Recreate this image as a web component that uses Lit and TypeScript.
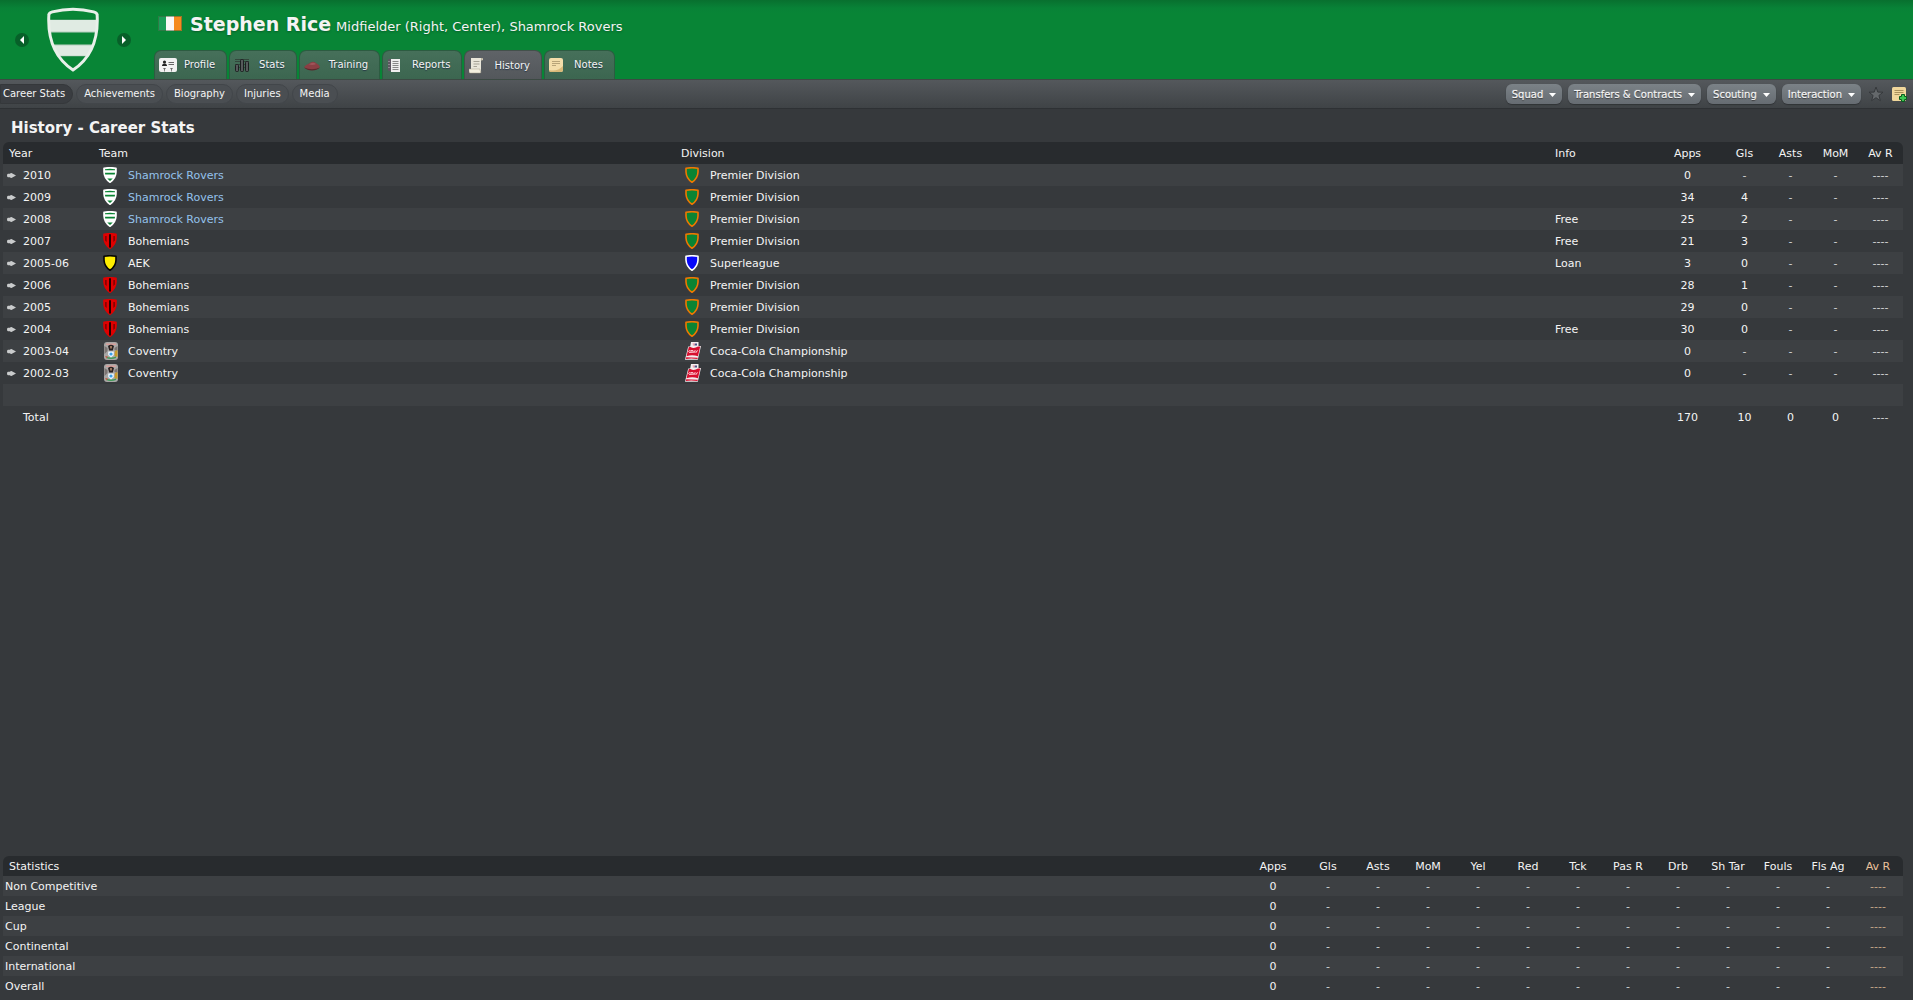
import { LitElement, html, css, svg, nothing } from "lit";
import { customElement } from "lit/decorators.js";
import { classMap } from "lit/directives/class-map.js";

type Season = {
  year: string;
  team: string;
  badge: string;
  own?: boolean;
  division: string;
  comp: string;
  info?: string;
  apps: string;
  gls: string;
};

const rovers = { team: "Shamrock Rovers", badge: "rovers", own: true };
const bohs = { team: "Bohemians", badge: "bohemians" };
const coventry = { team: "Coventry", badge: "coventry" };
const premier = { division: "Premier Division", comp: "premier" };
const cola = { division: "Coca-Cola Championship", comp: "cola" };

const SEASONS: Season[] = [
  { year: "2010", ...rovers, ...premier, apps: "0", gls: "-" },
  { year: "2009", ...rovers, ...premier, apps: "34", gls: "4" },
  { year: "2008", ...rovers, ...premier, info: "Free", apps: "25", gls: "2" },
  { year: "2007", ...bohs, ...premier, info: "Free", apps: "21", gls: "3" },
  { year: "2005-06", team: "AEK", badge: "aek", division: "Superleague", comp: "super", info: "Loan", apps: "3", gls: "0" },
  { year: "2006", ...bohs, ...premier, apps: "28", gls: "1" },
  { year: "2005", ...bohs, ...premier, apps: "29", gls: "0" },
  { year: "2004", ...bohs, ...premier, info: "Free", apps: "30", gls: "0" },
  { year: "2003-04", ...coventry, ...cola, apps: "0", gls: "-" },
  { year: "2002-03", ...coventry, ...cola, apps: "0", gls: "-" },
];

const TABS = ["Profile", "Stats", "Training", "Reports", "History", "Notes"];
const PAGES = ["Career Stats", "Achievements", "Biography", "Injuries", "Media"];
const MENUS = ["Squad", "Transfers & Contracts", "Scouting", "Interaction"];
const STAT_COLS = ["Gls", "Asts", "MoM", "Yel", "Red", "Tck", "Pas R", "Drb", "Sh Tar", "Fouls", "Fls Ag"];
const STAT_ROWS = ["Non Competitive", "League", "Cup", "Continental", "International", "Overall"];

const SHIELD = "M1 1.2C5 .6 9 .6 13 1.2V5C12.800 9.500 10.500 13 7 15.2C3.500 13 1.200 9.500 1 5Z";

const shield = (fill: string, edge: string) =>
  svg`<path d=${SHIELD} fill=${fill} stroke=${edge} stroke-width="1.6" stroke-linejoin="round"/>`;

const BADGES: Record<string, unknown> = {
  rovers: svg`${shield("#fff", "#fff")}
    <path d="M2 2.300Q7 1.200 12 2.300V3.200H2Z M2 5.800H12L11.800 7.400H2.200Z M4.200 11.600H9.800L7 14Z" fill="#0a8433"/>`,
  bohemians: svg`${shield("#e00000", "#e00000")}
    <path d="M6.100 1.200H7.900V14.500H6.100Z M2.600 3H3.300V9L2.600 7.500Z M11.400 3H10.700V9L11.400 7.500Z" fill="#100"/>`,
  aek: shield("#ffee00", "#050505"),
  premier: shield("#0a8433", "#f07800"),
  super: shield("#0808f8", "#ffffff"),
};

const badge = (name: string) => {
  if (name === "coventry") {
    return html`<svg class="badge wide" viewBox="0 0 16 18" aria-hidden="true">
      <rect x="1" y="0" width="14" height="18" rx="3" fill="#a9a7a6"/>
      <path d="M3 1.500H13V3H3Z" fill="#d8a09c"/>
      <path d="M1.500 4L4.500 6V9L1.500 12Z M14.500 4L11.500 6V8L14.500 9Z" fill="#7a7472"/>
      <path d="M5 4Q8 1.500 11 4L9.800 8.500H6.200Z" fill="#2b2222"/>
      <path d="M7.200 4H8.800V6.500H7.200Z" fill="#b58a6a"/>
      <path d="M12 9L14.500 8V15L11.500 14Z" fill="#c89a28"/>
      <path d="M3 14.500Q8 16.500 13 14.500V16Q8 18 3 16Z" fill="#3f9a58"/>
      <path d="M5.200 9.500H10.800V13L8 15.500L5.200 13Z" fill="#eaf6ff"/>
      <circle cx="8" cy="12" r="1.600" fill="#3aa0e8"/>
      <path d="M2 14L5 14.500L3.500 16.500Z" fill="#c8604a"/>
    </svg>`;
  }
  if (name === "cola") {
    return html`<svg class="badge wide" viewBox="0 0 16 18" aria-hidden="true">
      <path d="M6 0H13.500V4H16L12.800 17.800H0L3.200 4.500H5.200Z" fill="#f4eef0"/>
      <path d="M3.800 5H5.500Q9 7 13 4.500H15.200L13 14.200Q7 12.500 1.500 14.200Z" fill="#d80f2e"/>
      <path d="M7.500 1.200H10V3.200L8 3.800Z" fill="#e9aab4"/>
      <path d="M10 1.500H12V3.500H9.500Z" fill="#4a5288"/>
      <path d="M3.500 10Q4 8 5.500 8.500M6 10.200V8.500H8V10.200M9 10Q9.500 8.200 10.500 8.500M11.500 10L12.500 8.200M4 10.500L12 10" fill="none" stroke="#ffd0d8" stroke-width=".9"/>
      <path d="M1.200 15.300L12.800 15.800L12.500 17Q6 16 .800 17Z" fill="#d80f2e"/>
    </svg>`;
  }
  return html`<svg class="badge" viewBox="0 0 14 16" aria-hidden="true">${BADGES[name]}</svg>`;
};

const TAB_ICONS: Record<string, unknown> = {
  Profile: svg`<rect x="0" y="2" width="18" height="14" rx="2" fill="#f1f1f1"/>
    <circle cx="5.500" cy="6" r="1.600" fill="#222"/><path d="M3 10Q3 7.500 5.500 7.500T8 10Z" fill="#222"/>
    <path d="M9.500 6.500H15M9.500 8.500H15" stroke="#666" stroke-width="1"/>
    <path d="M5.500 12V15.500M12.500 12V15.500" stroke="#888" stroke-width="1"/><path d="M4 12H7L5.500 14ZM11 12H14L12.500 14Z" fill="#666"/>`,
  Stats: svg`<path d="M1 3.500H15M1 5.500H15M1 8.500H15M1 11.500H15" stroke="#33463b" stroke-width="1"/>
    <g stroke="#1c1f20" stroke-width="1" fill="#55595b"><rect x="1.500" y="8.500" width="3" height="7" rx="1"/><rect x="6.500" y="3.500" width="3" height="12" rx="1"/><rect x="11.500" y="5.500" width="3" height="10" rx="1"/></g>`,
  Training: svg`<path d="M0 11Q2 8.500 5 7.500Q8.500 4.500 12 7Q15.500 9 16 11Q13 14 8 14T0 11Z" fill="#8a3f44"/>
    <path d="M0 11.500Q8 15 16 11.500Q13 14.500 8 14.500T0 11.500Z" fill="#5a282c"/><path d="M5 8.500Q8.500 5.500 12 8Q9 9.500 5 8.500Z" fill="#a0545a"/>`,
  Reports: svg`<rect x="1" y="3" width="11" height="12" rx="1" fill="#5d5560"/><rect x="4" y="3" width="9" height="13" fill="#eee"/>
    <path d="M5.500 5.500H11.500M5.500 7.500H11.500M5.500 9.500H11.500M5.500 11.500H11.500M5.500 13.500H11.500" stroke="#888" stroke-width="1"/>
    <path d="M1 5.500H3M1 8.500H3M1 11.500H3" stroke="#8a858c" stroke-width="1"/>`,
  History: svg`<path d="M2 1H13Q14 1 14 3H12V14H1V12H2Z" fill="#e9e6da"/><path d="M0 12H11Q10.500 14 12 14.500Q12 16 11 16H1Q0 16 0 14Z" fill="#f4f0e0" stroke="#aaa38c" stroke-width=".5"/>
    <path d="M4.500 4.500H10.500M4.500 7H10.500M4.500 9.500H8" stroke="#a5a296" stroke-width="1"/><path d="M12 1H13.500V3.500H12Z" fill="#b9b39c"/>`,
  Notes: svg`<rect x="0" y="2" width="14" height="14" rx="2" fill="#f3ddaa"/><path d="M0 14Q8 16 14 10V14Q14 16 12 16H2Q0 16 0 14Z" fill="#d9b979"/>
    <path d="M3 5.500H11M3 7.500H11M3 9.500H7" stroke="#b8a478" stroke-width="1"/>`,
};

@customElement("app-root")
export class AppRoot extends LitElement {
  static styles = css`
    :host {
      display: block;
      box-sizing: border-box;
      min-height: 100vh;
      padding-right: 3px;
      background: #fff;
      color: #f4f4f4;
      font: 11px/22px "DejaVu Sans", sans-serif;
    }
    * { box-sizing: border-box; }
    button { font: inherit; color: inherit; background: none; border: 0; margin: 0; padding: 0; }
    a { color: inherit; text-decoration: none; }
    svg { display: block; flex: none; }
    .app { display: flex; flex-direction: column; min-height: 100vh; background: #36393c; }

    .banner {
      display: flex;
      height: 79px;
      background: linear-gradient(#08702f, #088237 8px, #088536 14px);
    }
    .switcher { display: flex; align-items: center; justify-content: space-between; width: 154px; padding: 0 23px 0 15px; }
    .step { display: flex; align-items: center; justify-content: center; width: 14px; height: 14px; border-radius: 7px; background: #076029; }
    .crest { width: 54px; height: 65px; }
    .ident { display: flex; flex-direction: column; justify-content: space-between; }
    .heading { display: flex; align-items: baseline; padding: 10px 0 0 4px; line-height: 28px; text-shadow: 0 1px 2px #06602a; }
    .flag { width: 24px; height: 15px; margin-right: 8px; }
    .name { margin: 0 5px 0 0; font-size: 19px; font-weight: bold; }
    .role { font-size: 13px; }

    .tabs { display: flex; gap: 2px; }
    .tab {
      display: flex;
      align-items: center;
      height: 29px;
      padding: 0 11px 0 4px;
      border: 1px solid #2c5c41;
      border-bottom: 0;
      border-radius: 7px 7px 0 0;
      background: linear-gradient(#46705a, #3c6650);
      font-size: 10px;
      line-height: 28px;
      text-shadow: 0 1px 1px #234;
    }
    .tab.active { background: linear-gradient(#5f6367, #53575b); border-color: #43514b; height: 30px; margin-bottom: -1px; }
    .tabicon { width: 18px; height: 18px; margin-right: 7px; }

    .subnav {
      display: flex;
      align-items: center;
      justify-content: space-between;
      height: 30px;
      padding-right: 6px;
      border-top: 1px solid #3c4a43;
      border-bottom: 1px solid #2e3134;
      background: linear-gradient(#54585c, #3f4346);
      font-size: 10px;
    }
    .pages { display: flex; gap: 3px; }
    .page {
      height: 20px;
      padding: 0 7px;
      border: 1px solid #42464a;
      border-radius: 10px;
      background: #4a4e52;
      line-height: 18px;
    }
    .page.active { background: #3a3d41; border-color: #35383b; border-radius: 0 10px 10px 0; padding-left: 2px; }
    .menus { display: flex; align-items: center; gap: 6px; }
    .menu {
      display: flex;
      align-items: center;
      gap: 6px;
      height: 20px;
      padding: 1px 6px 0;
      border-radius: 6px;
      background: linear-gradient(#7b8287, #666c72);
      box-shadow: 0 1px 1px #303336;
      line-height: 20px;
      text-shadow: 0 1px 1px #333, 0 0 1px #fff;
    }
    .tool { display: flex; margin-left: 1px; }

    .title { margin: 0; padding: 6px 11px 0; height: 33px; font-size: 15px; line-height: 26px; font-weight: bold; }
    .grid {
      width: calc(100% - 13px);
      margin-left: 3px;
      border-collapse: separate;
      border-spacing: 0;
      table-layout: fixed;
    }
    .grid th, .grid td { padding: 2px 0 0; font-weight: normal; text-align: center; white-space: nowrap; }
    .grid .text { text-align: left; }
    .grid .rich { padding: 0; }
    thead th { background: #282b2e; }
    .grid thead th:first-child { border-radius: 6px 0 0 0; padding-left: 6px; }
    thead th:last-child { border-radius: 0 6px 0 0; }
    tbody tr:nth-child(odd) { background: #3d4043; }
    .history th, .history td { height: 22px; line-height: 20px; }
    .c-year { width: 96px; }
    .c-team { width: 582px; }
    .c-info { width: 99px; }
    .c-apps { width: 67px; }
    .c-gls { width: 47px; }
    .c-num { width: 45px; }
    .cell { display: flex; align-items: center; height: 22px; }
    .label { padding-top: 2px; }
    .year { padding-left: 4px; }
    .expand { display: flex; width: 9px; height: 7px; margin-right: 7px; }
    .total { padding-left: 20px; }
    .badge { width: 14px; height: 16px; margin: 0 11px 0 4px; }
    .badge.wide { width: 16px; height: 18px; margin: 0 9px 0 4px; }
    .own { color: #94c2ec; }
    .none { color: #d2d4d5; }

    .statistics { margin-top: auto; margin-bottom: 4px; }
    .statistics th, .statistics td { height: 20px; line-height: 18px; }
    .statistics tbody .text { padding-left: 2px; }
    .s-apps { width: 60px; }
    .s-num { width: 50px; }
    .rating { color: #eac29c; }
    .rating.none { color: #c4a688; }
  `;

  private value(v: string, rating = false) {
    return html`<td class=${classMap({ none: v.startsWith("-"), rating })}>${v}</td>`;
  }

  private season(s: Season) {
    return html`<tr>
      <td class="text rich"><div class="cell year">
        <button class="expand" aria-label="Expand ${s.year}">
          <svg width="9" height="7" viewBox="0 0 9 7"><path d="M1 1.800H3Q3 1 4.500 1L9 3.500L4.500 6Q3 6 3 5.200H1Q0 5 0 3.500T1 1.800Z" fill="#c9cbcc"/></svg>
        </button><span class="label">${s.year}</span></div></td>
      <td class="text rich"><div class="cell">${badge(s.badge)}<a href="#" class=${classMap({ label: true, own: !!s.own })}>${s.team}</a></div></td>
      <td class="text rich"><div class="cell">${badge(s.comp)}<a href="#" class="label">${s.division}</a></div></td>
      <td class="text">${s.info ?? nothing}</td>
      ${[s.apps, s.gls, "-", "-", "----"].map((v) => this.value(v))}
    </tr>`;
  }

  render() {
    return html`<div class="app">
      <header class="banner">
        <div class="switcher">
          <button class="step" aria-label="Previous player"><svg width="4" height="8" viewBox="0 0 4 8"><path d="M4 0V8L0 4Z" fill="#fff"/></svg></button>
          <svg class="crest" viewBox="0 0 54 66" preserveAspectRatio="xMidYMin" aria-hidden="true">
            <path d="M2.500 8Q2.500 6 6 5Q27 -.500 48 5Q51.500 6 51.500 8C53 34 45 52 27 64C9 52 1 34 2.500 8Z" fill="#088536"/>
            <path d="M2.500 13H51.500V26H2.500ZM6 38H48L43 50H11Z" fill="#e0ebe3"/>
            <path d="M4 12.500H50M4 25.500H50M7 38.500H47M12 50H42" stroke="#066028" stroke-opacity=".25" stroke-width="1"/>
            <path d="M2.500 8Q2.500 6 6 5Q27 -.500 48 5Q51.500 6 51.500 8C53 34 45 52 27 64C9 52 1 34 2.500 8Z" fill="none" stroke="#e9f0ea" stroke-width="3"/>
          </svg>
          <button class="step" aria-label="Next player"><svg width="4" height="8" viewBox="0 0 4 8"><path d="M0 0V8L4 4Z" fill="#fff"/></svg></button>
        </div>
        <div class="ident">
          <div class="heading">
            <svg class="flag" viewBox="0 0 24 15" role="img" aria-label="Republic of Ireland">
              <path d="M0 0H8V15H0Z" fill="#1a9e58"/><path d="M8 0H16V15H8Z" fill="#f8f8f8"/><path d="M16 0H24V15H16Z" fill="#f58a1e"/>
              <path d="M.500 .500H23.500V14.500H.500Z" fill="none" stroke="#453" stroke-opacity=".5"/>
            </svg>
            <h1 class="name">Stephen Rice</h1>
            <span class="role">Midfielder (Right, Center), Shamrock Rovers</span>
          </div>
          <nav class="tabs">
            ${TABS.map((t) => html`<a href="#" class=${classMap({ tab: true, active: t === "History" })}>
              <svg class="tabicon" viewBox="0 0 18 18" aria-hidden="true">${TAB_ICONS[t]}</svg>${t}</a>`)}
          </nav>
        </div>
      </header>
      <div class="subnav">
        <nav class="pages">
          ${PAGES.map((p, i) => html`<a href="#" class=${classMap({ page: true, active: i === 0 })}>${p}</a>`)}
        </nav>
        <div class="menus">
          ${MENUS.map((m) => html`<button class="menu">${m}<svg width="7" height="4" viewBox="0 0 7 4"><path d="M0 0H7L3.500 4Z" fill="#fff"/></svg></button>`)}
          <button class="tool" aria-label="Shortlist"><svg width="16" height="16" viewBox="0 0 16 16"><path d="M8 1L9.800 6.100L15 6.200L10.900 9.500L12.400 14.700L8 11.700L3.600 14.700L5.100 9.500L1 6.200L6.200 6.100Z" fill="#64686b" stroke="#35383b" stroke-width="1"/></svg></button>
          <button class="tool" aria-label="Add note"><svg width="16" height="16" viewBox="0 0 16 16"><rect x="1" y="1" width="14" height="14" rx="1.500" fill="#f0d79b"/>
            <path d="M3.500 4.500H12.500M3.500 6.500H12.500M3.500 8.500H8.500" stroke="#a8915c" stroke-width="1"/>
            <path d="M10.500 8.500H13.500V10.500H15.500V13.500H13.500V15.500H10.500V13.500H8.500V10.500H10.500Z" fill="#3cc653" stroke="#0b5a1e" stroke-width="1"/></svg></button>
        </div>
      </div>
      <h2 class="title">History - Career Stats</h2>
      <table class="grid history">
        <colgroup><col class="c-year"><col class="c-team"><col><col class="c-info"><col class="c-apps"><col class="c-gls"><col class="c-num"><col class="c-num"><col class="c-num"></colgroup>
        <thead><tr>
          <th class="text">Year</th><th class="text">Team</th><th class="text">Division</th><th class="text">Info</th>
          <th>Apps</th><th>Gls</th><th>Asts</th><th>MoM</th><th>Av R</th>
        </tr></thead>
        <tbody>
          ${SEASONS.map((s) => this.season(s))}
          <tr><td colspan="9"></td></tr>
          <tr><td class="text rich" colspan="4"><div class="cell total"><span class="label">Total</span></div></td>${["170", "10", "0", "0", "----"].map((v) => this.value(v))}</tr>
        </tbody>
      </table>
      <table class="grid statistics">
        <colgroup><col><col class="s-apps">${STAT_COLS.map(() => html`<col class="s-num">`)}<col class="s-num"></colgroup>
        <thead><tr><th class="text">Statistics</th><th>Apps</th>${STAT_COLS.map((c) => html`<th>${c}</th>`)}<th class="rating">Av R</th></tr></thead>
        <tbody>
          ${STAT_ROWS.map((r) => html`<tr><td class="text">${r}</td>${this.value("0")}${STAT_COLS.map(() => this.value("-"))}${this.value("----", true)}</tr>`)}
        </tbody>
      </table>
    </div>`;
  }
}
